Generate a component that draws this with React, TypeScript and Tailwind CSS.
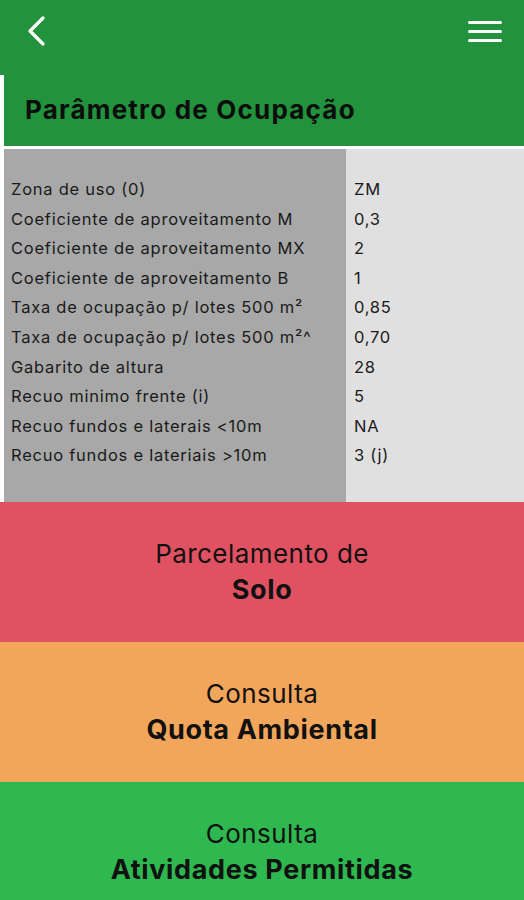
import React from "react";

const rows: [string, string][] = [
  ["Zona de uso (0)", "ZM"],
  ["Coeficiente de aproveitamento M", "0,3"],
  ["Coeficiente de aproveitamento MX", "2"],
  ["Coeficiente de aproveitamento B", "1"],
  ["Taxa de ocupação p/ lotes 500 m²", "0,85"],
  ["Taxa de ocupação p/ lotes 500 m²^", "0,70"],
  ["Gabarito de altura", "28"],
  ["Recuo minimo frente (i)", "5"],
  ["Recuo fundos e laterais <10m", "NA"],
  ["Recuo fundos e lateriais >10m", "3 (j)"],
];

function ActionBlock({ color, top, bottom }: { color: string; top: string; bottom: string }) {
  return (
    <button className={`flex h-[140px] w-full flex-col items-center justify-center leading-[36px] text-[#111] ${color}`}>
      <span className="text-[26px] tracking-[0.45px]">{top}</span>
      <span className="text-[27px] font-bold tracking-[0.65px]">{bottom}</span>
    </button>
  );
}

export default function App() {
  return (
    <div className="min-h-[900px] w-[524px] overflow-hidden bg-white font-['Inter',sans-serif]">
      <header className="flex h-[75px] items-center justify-between bg-[#23923c] pb-[13px] pl-[26px] pr-[22px]">
        <svg width="22" height="32" viewBox="0 0 22 32" fill="none">
          <path d="M17 3 L4 16 L17 29" stroke="white" strokeWidth="3.2" strokeLinecap="round" strokeLinejoin="round" />
        </svg>
        <svg width="34" height="26" viewBox="0 0 34 26" fill="none">
          <rect x="0" y="3" width="34" height="3" rx="1.5" fill="white" />
          <rect x="0" y="12" width="34" height="3" rx="1.5" fill="white" />
          <rect x="0" y="21" width="34" height="3" rx="1.5" fill="white" />
        </svg>
      </header>

      <div className="pl-[4px]">
        <h1 className="flex h-[71px] items-center bg-[#23923c] pb-[3px] pl-[21px] text-[26px] font-bold tracking-[1.2px] text-[#0d0d0d]">
          Parâmetro de Ocupação
        </h1>
        <div className="mt-[3px] grid h-[353px] grid-cols-[342px_1fr] text-[16.5px] tracking-[0.75px] text-[#1a1a1a]">
          <div className="flex flex-col bg-[#a8a8a8] pl-[7px] pt-[26px]">
            {rows.map(([label]) => (
              <div key={label} className="h-[29.6px] leading-[29.6px]">{label}</div>
            ))}
          </div>
          <div className="flex flex-col bg-[#e0e0e0] pl-[8px] pt-[26px]">
            {rows.map(([label, value]) => (
              <div key={label} className="h-[29.6px] leading-[29.6px]">{value}</div>
            ))}
          </div>
        </div>
      </div>

      <ActionBlock color="bg-[#e05162]" top="Parcelamento de" bottom="Solo" />
      <ActionBlock color="bg-[#f2a65b]" top="Consulta" bottom="Quota Ambiental" />
      <ActionBlock color="bg-[#2eb84f]" top="Consulta" bottom="Atividades Permitidas" />
    </div>
  );
}
